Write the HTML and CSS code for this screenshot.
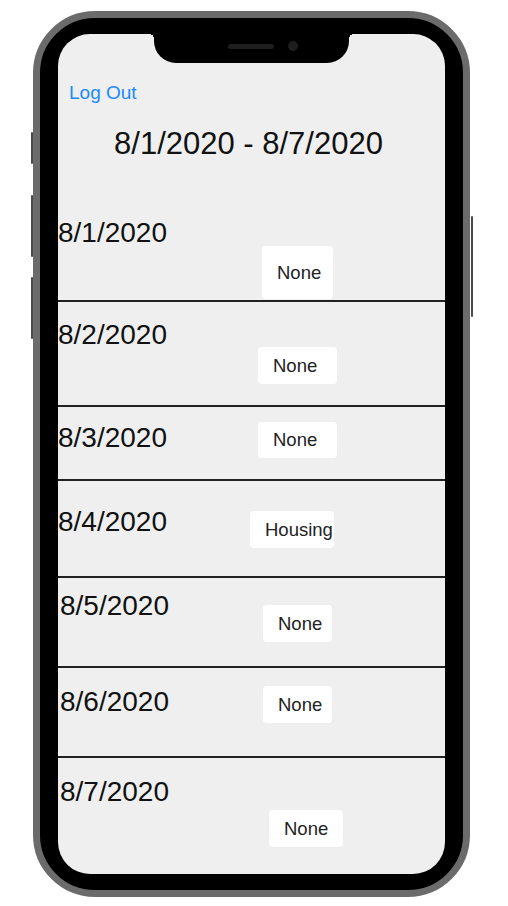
FILE: index.html
```html
<!DOCTYPE html>
<html lang="en">
<head>
<meta charset="UTF-8">
<title>Week</title>
<link rel="stylesheet" href="styles.css">
</head>
<body>
<div class="phone">
    <span class="key key-mute"></span>
    <span class="key key-up"></span>
    <span class="key key-down"></span>
    <span class="key key-power"></span>
    <div class="screen">
        <div class="notch">
            <span class="speaker"></span>
            <span class="camera"></span>
        </div>
        <a class="logout" href="#">Log Out</a>
        <h1 class="week">8/1/2020 - 8/7/2020</h1>
        <ul class="days">
            <li class="day day-1"><span class="date">8/1/2020</span><span class="pick">None</span></li>
            <li class="day day-2"><span class="date">8/2/2020</span><span class="pick">None</span></li>
            <li class="day day-3"><span class="date">8/3/2020</span><span class="pick">None</span></li>
            <li class="day day-4"><span class="date">8/4/2020</span><span class="pick">Housing</span></li>
            <li class="day day-5"><span class="date">8/5/2020</span><span class="pick">None</span></li>
            <li class="day day-6"><span class="date">8/6/2020</span><span class="pick">None</span></li>
            <li class="day day-7"><span class="date">8/7/2020</span><span class="pick">None</span></li>
        </ul>
    </div>
</div>
</body>
</html>
```

FILE: styles.css
```css
* {
    margin: 0;
    padding: 0;
    box-sizing: border-box;
}

body {
    font-family: "Liberation Sans", Arial, sans-serif;
    background-color: #fff;
}

/* phone frame */
.phone {
    position: relative;
    width: 437px;
    height: 886px;
    margin: 11px 0 0 33px;
    padding: 16px 18px;
    background-color: #000;
    border: 7px solid #6b6b6b;
    border-radius: 62px;
}

.key {
    position: absolute;
    width: 2px;
    background-color: #4a4a4a;
    border-radius: 1px;
}

.key-mute {
    left: -9px;
    top: 114px;
    height: 32px;
}

.key-up {
    left: -9px;
    top: 177px;
    height: 62px;
}

.key-down {
    left: -9px;
    top: 259px;
    height: 62px;
}

.key-power {
    right: -10px;
    top: 198px;
    height: 101px;
}

.screen {
    position: relative;
    height: 100%;
    background-color: #efefef;
    border-radius: 32px;
    overflow: hidden;
}

.notch {
    position: absolute;
    top: 0;
    left: 96px;
    width: 195px;
    height: 29px;
    background-color: #000;
    border-radius: 0 0 22px 22px;
}

.notch::before,
.notch::after {
    content: "";
    position: absolute;
    top: 0;
    width: 5px;
    height: 5px;
}

.notch::before {
    left: -5px;
    background: radial-gradient(circle at 0 100%, transparent 5px, #000 5px);
}

.notch::after {
    right: -5px;
    background: radial-gradient(circle at 100% 100%, transparent 5px, #000 5px);
}

.speaker {
    position: absolute;
    left: 74px;
    top: 10px;
    width: 46px;
    height: 5px;
    background-color: #1e1e1e;
    border-radius: 3px;
}

.camera {
    position: absolute;
    left: 134px;
    top: 7px;
    width: 10px;
    height: 10px;
    background-color: #1e1e1e;
    border-radius: 50%;
}

/* header */
.logout {
    display: block;
    width: fit-content;
    margin: 48px 0 0 11px;
    font-size: 19px;
    line-height: 22px;
    color: #1a8bff;
    text-decoration: none;
}

.week {
    margin-top: 22px;
    padding-right: 6px;
    font-size: 31px;
    font-weight: normal;
    line-height: 36px;
    text-align: center;
    color: #111;
}

/* day rows */
.days {
    list-style: none;
}

.day {
    display: flex;
    align-items: flex-start;
    border-bottom: 2px solid #222;
}

.date {
    flex: none;
    width: 200px;
    font-size: 28px;
    line-height: 32px;
    color: #111;
}

.pick {
    flex: none;
    height: 37px;
    padding-left: 15px;
    font-size: 18.5px;
    line-height: 37px;
    color: #222;
    background-color: #fff;
    border-radius: 4px;
    white-space: nowrap;
    overflow: hidden;
}

.day-1 {
    height: 140px;
    padding-top: 55px;
}

.day-1 .pick {
    width: 71px;
    height: 53px;
    margin: 29px 0 0 4px;
    line-height: 53px;
}

.day-2 {
    height: 105px;
    padding-top: 17px;
}

.day-2 .pick {
    width: 79px;
    margin-top: 28px;
}

.day-3 {
    height: 74px;
    padding-top: 15px;
}

.day-3 .pick {
    width: 79px;
    height: 36px;
    line-height: 36px;
}

.day-4 {
    height: 97px;
    padding-top: 25px;
}

.day-4 .pick {
    width: 84px;
    margin: 5px 0 0 -8px;
}

.day-5 {
    height: 90px;
    padding: 12px 0 0 2px;
}

.day-5 .pick {
    width: 69px;
    margin: 15px 0 0 3px;
}

.day-6 {
    height: 90px;
    padding: 18px 0 0 2px;
}

.day-6 .pick {
    width: 69px;
    margin-left: 3px;
}

.day-7 {
    padding: 18px 0 0 2px;
    border-bottom: 0;
}

.day-7 .pick {
    width: 74px;
    margin: 34px 0 0 9px;
}
```
